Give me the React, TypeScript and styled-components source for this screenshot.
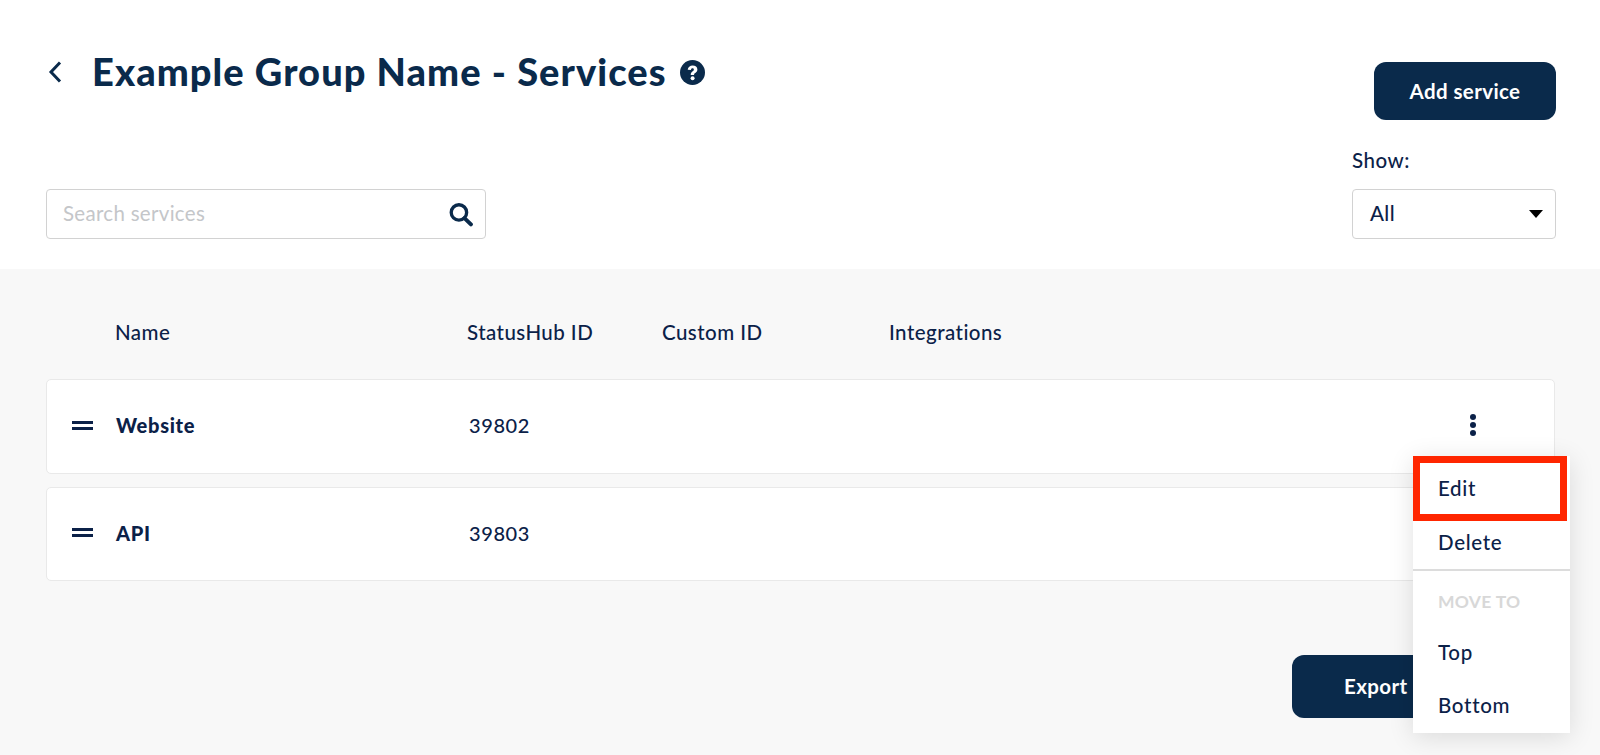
import React from "react";
import styled, { createGlobalStyle } from "styled-components";

const Global = createGlobalStyle`
  html, body { margin: 0; padding: 0; background: #f8f8f8; height: 755px; overflow: hidden; }
  * { box-sizing: border-box; }
  #root { font-family: Lato, "Noto Sans", sans-serif; color: #0b2148; }
`;

const Page = styled.div`
  width: 1600px;
  height: 755px;
  display: flex;
  flex-direction: column;
  position: relative;
  overflow: hidden;
`;

const Top = styled.header`
  height: 269px;
  background: #fff;
  padding: 62px 44px 0 46px;
  display: flex;
  justify-content: space-between;
`;

const LeftCol = styled.div`
  width: 700px;
  display: flex;
  flex-direction: column;
`;

const TitleRow = styled.div`
  display: flex;
  align-items: center;
  height: 20px;
`;

const Back = styled.span`
  display: flex;
  width: 46px;
  color: #0a2a4b;
`;

const Title = styled.h1`
  margin: -3px 0 0;
  font-size: 38px;
  font-weight: 900;
  line-height: 20px;
  color: #0a2a4b;
  white-space: nowrap;
  letter-spacing: 1.07px;
`;

const Help = styled.span`
  display: flex;
  margin-left: 13px;
  color: #0a2a4b;
`;

const Search = styled.div`
  margin-top: 107px;
  width: 440px;
  height: 50px;
  border: 1px solid #d2d2d2;
  border-radius: 4px;
  display: flex;
  align-items: center;
  justify-content: space-between;
  padding: 0 12px 0 16px;
  background: #fff;
`;

const Placeholder = styled.span`
  font-size: 20.5px;
  color: #c4c6c9;
  letter-spacing: 0.3px;
  margin-top: -2px;
`;

const RightCol = styled.div`
  width: 204px;
  display: flex;
  flex-direction: column;
  align-items: flex-end;
`;

const PrimaryButton = styled.div`
  background: #0a2a4b;
  color: #fff;
  font-size: 20.5px;
  font-weight: 700;
  letter-spacing: 0.4px;
  border-radius: 12px;
  display: flex;
  align-items: center;
  justify-content: center;
`;

const AddButton = styled(PrimaryButton)`
  width: 182px;
  height: 58px;
`;

const ShowLabel = styled.div`
  align-self: flex-start;
  margin-top: 29px;
  height: 22px;
  line-height: 22px;
  font-size: 20.5px;
  font-weight: 500;
  letter-spacing: 0.5px;
`;

const Select = styled.div`
  margin-top: 18px;
  width: 204px;
  height: 50px;
  border: 1px solid #d2d2d2;
  border-radius: 4px;
  display: flex;
  align-items: center;
  justify-content: space-between;
  padding: 0 12px 2px 17px;
  font-size: 20.5px;
  font-weight: 500;
  letter-spacing: 0.4px;
`;

const Caret = styled.span`
  width: 0;
  height: 0;
  margin: 2px 0 0 0;
  border-left: 7.5px solid transparent;
  border-right: 7.5px solid transparent;
  border-top: 8px solid #000;
`;

const Body = styled.main`
  flex: 1;
  padding: 0 45px 0 46px;
  display: flex;
  flex-direction: column;
`;

const HeadRow = styled.div`
  display: flex;
  height: 110px;
  padding-top: 51px;
  font-size: 20.5px;
  font-weight: 500;
  line-height: 24px;
  letter-spacing: 0.45px;
  color: #0b2148;
`;

const HeadCell = styled.div<{ $w: number }>`
  width: ${(p) => p.$w}px;
  flex: none;
`;

const RowCard = styled.div`
  height: 94.5px;
  background: #fff;
  border: 1px solid #e9e9e9;
  border-radius: 5px;
  display: flex;
  align-items: center;
  margin-bottom: 13px;
  padding: 0 0 2px 25px;
  font-size: 20px;
`;

const Drag = styled.span`
  width: 21px;
  height: 9px;
  flex: none;
  border-top: 3px solid #0b2148;
  border-bottom: 3px solid #0b2148;
  margin-right: 23px;
`;

const RowName = styled.div`
  width: 353px;
  font-weight: 900;
  flex: none;
  letter-spacing: 0.7px;
`;

const RowId = styled.div`
  flex: 1;
  font-weight: 500;
  letter-spacing: 0.6px;
`;

const Kebab = styled.span`
  display: flex;
  flex-direction: column;
  gap: 2px;
  margin-right: 78px;
  i {
    display: block;
    width: 6px;
    height: 6px;
    border-radius: 50%;
    background: #0b2148;
  }
`;

const Footer = styled.div`
  display: flex;
  justify-content: flex-end;
  margin-top: 61px;
`;

const ExportButton = styled(PrimaryButton)`
  width: 263px;
  height: 63px;
  justify-content: flex-start;
  padding: 0 0 2px 52px;
`;

const Menu = styled.div`
  position: absolute;
  left: 1413px;
  top: 456px;
  width: 157px;
  height: 277px;
  background: #fff;
  box-shadow: 0 4px 24px rgba(0, 0, 0, 0.12);
  display: flex;
  flex-direction: column;
  font-size: 20.5px;
  font-weight: 500;
  letter-spacing: 0.7px;
`;

const MenuItem = styled.div<{ $h: number; $pb?: number; $highlight?: boolean }>`
  height: ${(p) => p.$h}px;
  display: flex;
  align-items: center;
  padding-bottom: ${(p) => p.$pb ?? 0}px;
  padding-left: ${(p) => (p.$highlight ? 18 : 25)}px;
  ${(p) => p.$highlight && "border: 7px solid #ff2600; margin-right: 3px;"}
`;

const Divider = styled.div`
  height: 2px;
  background: #dcdcdc;
`;

const MenuLabel = styled.div`
  height: 61px;
  display: flex;
  align-items: center;
  padding-left: 25px;
  font-size: 17.5px;
  font-weight: 700;
  letter-spacing: 0.3px;
  color: #d8d8d8;
`;

const rows = [
  { name: "Website", id: "39802", kebab: true },
  { name: "API", id: "39803", kebab: false },
];

export default function App() {
  return (
    <Page>
      <Global />
      <Top>
        <LeftCol>
          <TitleRow>
            <Back>
              <svg width="20" height="24" viewBox="0 0 20 24" fill="none">
                <path d="M14 2.5 L5 12 L14 21.5" stroke="currentColor" strokeWidth="3" />
              </svg>
            </Back>
            <Title>Example Group Name - Services</Title>
            <Help>
              <svg width="25" height="25" viewBox="0 0 24 24">
                <circle cx="12" cy="12" r="12" fill="currentColor" />
                <path d="M7.4 9.4c.2-2.7 2.2-4.2 4.7-4.2 2.7 0 4.6 1.5 4.6 3.9 0 3.2-3.2 3.1-3.2 5.2h-3.2c0-3.5 3-3.4 3-5 0-.8-.6-1.3-1.3-1.3-.9 0-1.4.6-1.5 1.6z" fill="#fff" />
                <circle cx="12.1" cy="17.6" r="1.9" fill="#fff" />
              </svg>
            </Help>
          </TitleRow>
          <Search>
            <Placeholder>Search services</Placeholder>
            <svg width="25" height="25" viewBox="0 0 24 24" fill="none">
              <circle cx="10.5" cy="10" r="7.4" stroke="#0a2a4b" strokeWidth="3.2" />
              <path d="M15.8 15.5 L22 21.5" stroke="#0a2a4b" strokeWidth="3.8" strokeLinecap="round" />
            </svg>
          </Search>
        </LeftCol>
        <RightCol>
          <AddButton>Add service</AddButton>
          <ShowLabel>Show:</ShowLabel>
          <Select>
            All
            <Caret />
          </Select>
        </RightCol>
      </Top>
      <Body>
        <HeadRow>
          <HeadCell $w={69} />
          <HeadCell $w={352}>Name</HeadCell>
          <HeadCell $w={195}>StatusHub ID</HeadCell>
          <HeadCell $w={227}>Custom ID</HeadCell>
          <HeadCell $w={200}>Integrations</HeadCell>
        </HeadRow>
        {rows.map((r) => (
          <RowCard key={r.id}>
            <Drag />
            <RowName>{r.name}</RowName>
            <RowId>{r.id}</RowId>
            {r.kebab && (
              <Kebab>
                <i />
                <i />
                <i />
              </Kebab>
            )}
          </RowCard>
        ))}
        <Footer>
          <ExportButton>Export</ExportButton>
        </Footer>
      </Body>
      <Menu>
        <MenuItem $h={65} $pb={2} $highlight>Edit</MenuItem>
        <MenuItem $h={48} $pb={7}>Delete</MenuItem>
        <Divider />
        <MenuLabel>MOVE TO</MenuLabel>
        <MenuItem $h={50} $pb={10}>Top</MenuItem>
        <MenuItem $h={51} $pb={5}>Bottom</MenuItem>
      </Menu>
    </Page>
  );
}
